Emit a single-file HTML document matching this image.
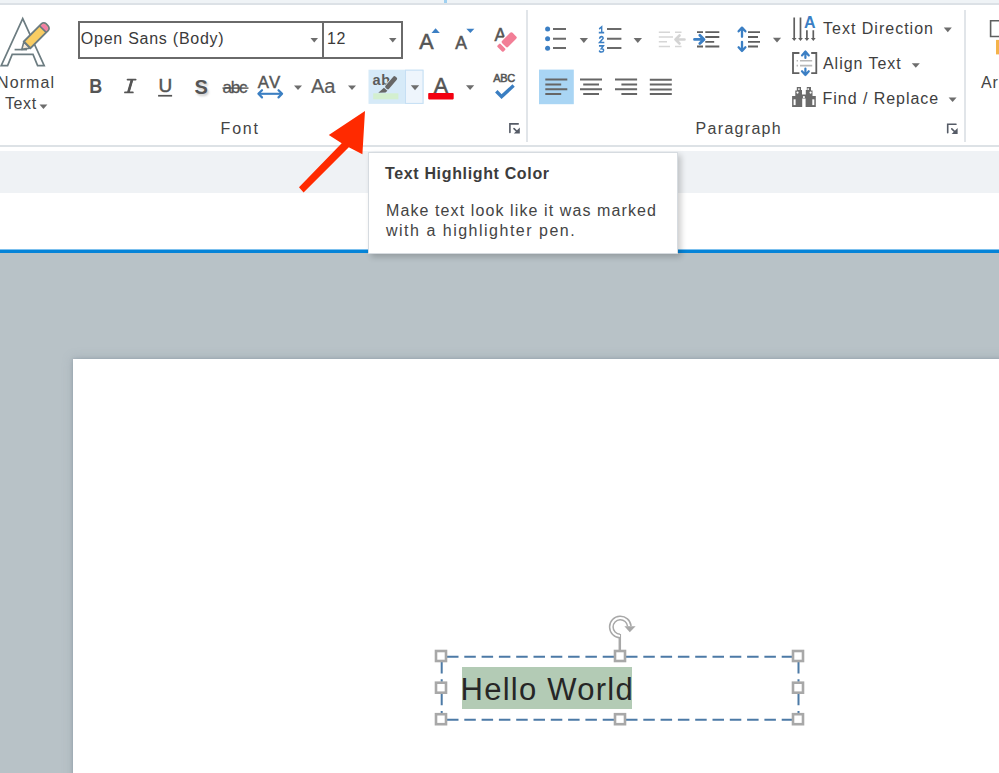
<!DOCTYPE html>
<html><head><meta charset="utf-8">
<style>
html,body{margin:0;padding:0;}
body{width:999px;height:773px;position:relative;overflow:hidden;background:#fff;font-family:"Liberation Sans",sans-serif;color:#444;}
.a{position:absolute;}
.t{position:absolute;font-size:16px;line-height:16px;white-space:pre;color:#444;}
svg{position:absolute;overflow:visible;}
</style></head>
<body>
<!-- top strip -->
<div class="a" style="left:0;top:0;width:999px;height:3px;background:#eff3f6"></div>
<div class="a" style="left:0;top:3px;width:999px;height:2px;background:#dce1e6"></div>
<div class="a" style="left:444px;top:0;width:3px;height:3px;background:#9fd0f0"></div>
<!-- ribbon bottom border -->
<div class="a" style="left:0;top:145px;width:999px;height:2px;background:#dde2e6"></div>
<!-- grey bar -->
<div class="a" style="left:0;top:151px;width:999px;height:42px;background:#eff2f5"></div>
<!-- blue line -->
<div class="a" style="left:0;top:249px;width:999px;height:4px;background:linear-gradient(#7cc0ee 0,#7cc0ee 25%,#0584d8 25%)"></div>
<!-- workspace -->
<div class="a" style="left:0;top:253px;width:999px;height:520px;background:#b8c2c7"></div>
<!-- slide -->
<div class="a" style="left:73px;top:359px;width:960px;height:440px;background:#fff;box-shadow:0 0 3px rgba(120,135,150,0.5),0 0 10px rgba(120,135,150,0.35)"></div>


<!-- font combo -->
<div class="a" style="left:78px;top:21px;width:243px;height:34px;border:2px solid #6a6a6a;background:#fff"></div>
<div class="a" style="left:322px;top:21px;width:77px;height:34px;border:2px solid #6a6a6a;background:#fff"></div>
<div class="t" style="left:80.8px;top:30.7px;letter-spacing:0.75px;color:#3a3a3a">Open Sans (Body)</div>
<div class="t" style="left:327px;top:30.5px;letter-spacing:0.5px;color:#3a3a3a">12</div>

<svg class="a" style="left:0;top:0" width="999" height="773" viewBox="0 0 999 773">
<defs><filter id="blur1" x="-50%" y="-50%" width="200%" height="200%"><feGaussianBlur stdDeviation="0.9"/></filter></defs>
<g font-family="Liberation Sans, sans-serif">
<!-- Normal Text icon: A outline -->
<path d="M22.7 18.6 L1.2 65.6 L7.6 65.6 L12.2 54.4 L33 54.4 L37.6 65.6 L44.2 65.6 Z" fill="none" stroke="#6c7c81" stroke-width="1.7" stroke-linejoin="miter"/>
<line x1="14.6" y1="49.6" x2="27" y2="49.6" stroke="#6c7c81" stroke-width="1.7"/>
<g transform="translate(26.6,45.4) rotate(-45)">
  <path d="M0.5 -4.4 L-6.2 -0.6 L0.5 4.4 Z" fill="#f6ead8" stroke="#6c7c81" stroke-width="1.6" stroke-linejoin="round"/>
  <path d="M0.8 -4.7 H25.6 A3.4 3.4 0 0 1 29 -1.3 V1.3 A3.4 3.4 0 0 1 25.6 4.7 H0.8 Z" fill="#f9cd63" stroke="#6c7c81" stroke-width="1.8"/>
  <path d="M23.4 -3.8 H25.4 A2.6 2.6 0 0 1 28 -1.2 V1.2 A2.6 2.6 0 0 1 25.4 3.8 H23.4 Z" fill="#f37fa6"/>
  <line x1="23" y1="-4.7" x2="23" y2="4.7" stroke="#6c7c81" stroke-width="1.7"/>
</g>

<!-- Font group row 1 -->
<path d="M310.5 38 H318 L314.25 42.5 Z" fill="#6d6d6d"/>
<path d="M389 38 H396.5 L392.75 42.5 Z" fill="#6d6d6d"/>
<text x="419.3" y="48.6" font-size="21.5" fill="#555" stroke="#555" stroke-width="0.55">A</text>
<path d="M431.5 33 L435.6 28.3 L439.8 33 Z" fill="#3c7fc4"/>
<text x="455.3" y="48.6" font-size="17.5" fill="#555" stroke="#555" stroke-width="0.55">A</text>
<path d="M466.3 28.8 H474.4 L470.35 33 Z" fill="#3c7fc4"/>
<text x="494.6" y="40.8" font-size="17.5" fill="#555" stroke="#555" stroke-width="0.5">A</text>
<g transform="translate(509.2,39.8) rotate(-45) scale(1.08)">
  <rect x="-8" y="-5.2" width="16" height="10.4" rx="2" fill="#fff"/>
  <rect x="-6.8" y="-3.95" width="13.6" height="7.9" rx="1.6" fill="#f27e96"/>
  <rect x="-12.3" y="-3.95" width="4" height="7.9" rx="1" fill="#f27e96"/>
</g>

<!-- Font group row 2 -->
<text transform="translate(89.3,93.2) scale(0.9,1.02)" font-size="20" font-weight="bold" fill="#555">B</text>
<path d="M127.6 79.6 H135.6 M125 92.4 H132.8 M132 79.8 L128.4 92.2" fill="none" stroke="#555" stroke-width="1.9" stroke-linecap="round"/><path d="M132 79.8 L128.4 92.2" stroke="#555" stroke-width="2.6"/>
<text x="158.6" y="92.3" font-size="19" fill="#555" stroke="#555" stroke-width="0.5">U</text>
<rect x="158.1" y="94.9" width="14" height="1.7" fill="#555"/>
<text x="196" y="95.5" font-size="20" font-weight="bold" fill="#bbb" opacity="0.8" filter="url(#blur1)">S</text>
<text x="194.5" y="93.6" font-size="20" font-weight="bold" fill="#555">S</text>
<text x="222.5" y="93.3" font-size="17" fill="#555" stroke="#555" stroke-width="0.3" style="letter-spacing:-1.2px">abc</text>
<rect x="222.5" y="87.4" width="26" height="1.4" fill="#555"/>

<text x="257.8" y="88.3" font-size="16.8" fill="#555" stroke="#555" stroke-width="0.45" style="letter-spacing:1.3px">AV</text>
<path d="M258.5 93.8 H282" stroke="#3b7fc2" stroke-width="2.1"/>
<path d="M262 90.2 L258.4 93.8 L262 97.4 M278.5 90.2 L282.1 93.8 L278.5 97.4" fill="none" stroke="#3b7fc2" stroke-width="2.2" stroke-linecap="round" stroke-linejoin="round"/>
<path d="M294 85.4 H302 L298 89.9 Z" fill="#6d6d6d"/>
<text x="311" y="93.2" font-size="20" fill="#5a5a5a" stroke="#5a5a5a" stroke-width="0.2">Aa</text>
<path d="M348 85.4 H356 L352 89.9 Z" fill="#6d6d6d"/>

<!-- highlight split button -->
<rect x="368.5" y="69.7" width="55" height="34.2" fill="#d6eaf8"/>
<rect x="405.5" y="70.2" width="17.5" height="33.2" fill="#eef5fc" stroke="#c6dff4" stroke-width="1"/>
<text x="372.6" y="85.2" font-size="14.5" font-weight="bold" fill="#5b5b5b" style="letter-spacing:0.6px">ab</text>
<rect x="373.2" y="93.3" width="25.2" height="6" fill="#d3efcf"/>
<g transform="translate(391.15,82.75) rotate(-50)">
  <rect x="-7.5" y="-3.1" width="15.5" height="6.2" rx="2" fill="#d6eaf8"/>
  <rect x="-7.5" y="-2.3" width="15" height="4.6" rx="1.5" fill="#666"/>
</g>
<path d="M383.9 87.8 L387.4 90.7 L385.5 92.4 L378.3 92.8 Z" fill="#666"/>
<path d="M410.8 85.3 H419.2 L415 90.3 Z" fill="#6d6d6d"/>

<text x="433.8" y="93" font-size="21.5" fill="#555" stroke="#555" stroke-width="0.55">A</text>
<rect x="428.2" y="93.1" width="25.5" height="6.3" rx="0.8" fill="#f30010"/>
<path d="M466 85.2 H474.2 L470.1 89.9 Z" fill="#6d6d6d"/>
<text x="493.2" y="82" font-size="11" fill="#555" stroke="#555" stroke-width="0.55" style="letter-spacing:-0.3px">ABC</text>
<path d="M496.3 91.2 L501.6 96.6 L513.6 85.6" fill="none" stroke="#3a7ec2" stroke-width="3.4" stroke-linecap="butt" stroke-linejoin="miter"/>

<!-- launchers -->
<path d="M509.9 132.5 V123.9 H518.2" fill="none" stroke="#555b66" stroke-width="1.6" stroke-linecap="round"/>
<path d="M514 128.6 L517.5 132" stroke="#555b66" stroke-width="1.6" stroke-linecap="round"/>
<path d="M513.8 133.6 H519.8 V127.6 Z" fill="#555b66"/>
<path d="M947.7 132.8 V124.2 H956" fill="none" stroke="#555b66" stroke-width="1.6" stroke-linecap="round"/>
<path d="M951.8 128.9 L955.3 132.3" stroke="#555b66" stroke-width="1.6" stroke-linecap="round"/>
<path d="M951.6 133.9 H957.6 V127.9 Z" fill="#555b66"/>


<!-- Paragraph: bullets -->
<g fill="#3b7fc4">
<circle cx="547.6" cy="29" r="2.5"/><circle cx="547.6" cy="38.7" r="2.5"/><circle cx="547.6" cy="48.2" r="2.5"/>
</g>
<g stroke="#6a6a6a" stroke-width="2">
<path d="M553 28.9 H566 M553 38.7 H566 M553 48.1 H566"/>
<path d="M607 28.9 H621.4 M607 38.7 H621.4 M607 48.1 H621.4"/>
</g>
<path d="M579.7 38 H588 L583.85 43 Z" fill="#6d6d6d"/>
<path d="M633.6 38 H642 L637.8 43 Z" fill="#6d6d6d"/>
<g fill="none" stroke="#3b7fc4" stroke-width="1.7" stroke-linecap="square" transform="translate(601.4,0) scale(0.8,1) translate(-601.4,0)">
<path d="M599.3 28.5 L601.8 26.9 V32.6 M599 32.6 H604"/>
<path d="M599.2 38 Q599.6 36.6 601.5 36.6 Q603.8 36.6 603.6 38.4 L599.2 42.5 H604.2"/>
<path d="M599.2 45.8 H603.8 L601.3 48.6 Q604.2 48.6 604.2 50.3 Q604 52 601.6 52 Q599.6 52 599.1 51.2"/>
</g>

<!-- decrease indent (disabled) -->
<g stroke="#d6d6d6" stroke-width="1.6">
<path d="M658.8 32.2 H670 M675 32.2 H681.5 M658.8 37 H673 M658.8 41.8 H667 M658.8 46.5 H670 M675 46.5 H681.5"/>
</g>
<path d="M684.5 39.5 H676 M679.5 35.5 L675.5 39.5 L679.5 43.5" fill="none" stroke="#d4d4d4" stroke-width="2.6" stroke-linejoin="round" stroke-linecap="round"/>
<!-- increase indent -->
<g stroke="#5f5f5f" stroke-width="1.8">
<path d="M697 32.2 H703 M705.3 32.2 H719.3 M705.3 37 H719.3 M705.3 41.8 H714.2 M705.3 46.5 H719.3 M697 46.5 H703"/>
</g>
<path d="M694.5 39.4 H703.3 M699.8 35.2 L704 39.4 L699.8 43.6" fill="none" stroke="#3b7fc4" stroke-width="2.8" stroke-linejoin="round" stroke-linecap="round"/>
<!-- line spacing -->
<g stroke="#5f5f5f" stroke-width="1.8">
<path d="M748 32.2 H760 M748 37 H758 M748 41.8 H760 M748 46.5 H758"/>
</g>
<g fill="none" stroke="#3b7fc4" stroke-width="2.3" stroke-linecap="round" stroke-linejoin="round">
<path d="M742 28 V36.8 M738.6 31.3 L742 27.6 L745.4 31.3"/>
<path d="M742 41.8 V50.5 M738.6 47.3 L742 51 L745.4 47.3"/>
</g>
<path d="M772.9 37.8 H781.1 L777 42.5 Z" fill="#6d6d6d"/>

<!-- alignment row -->
<rect x="539" y="69.6" width="34.8" height="34.6" fill="#a9d5f4"/>
<g stroke="#666" stroke-width="2">
<path d="M545.3 79.6 H567.3 M545.3 84.6 H561.2 M545.3 89.3 H567.3 M545.3 94.1 H561.2"/>
<path d="M580 79.6 H602 M583.2 84.6 H599 M580 89.3 H602 M583.2 94.1 H599"/>
<path d="M615 79.6 H637.1 M621.4 84.6 H637.1 M615 89.3 H637.1 M621.4 94.1 H637.1"/>
<path d="M649.8 79.8 H671.8 M649.8 84.5 H671.8 M649.8 89.4 H671.8 M649.8 94 H671.8"/>
</g>

<!-- text direction -->
<g stroke="#5f5f5f" stroke-width="1.7">
<path d="M794.2 17.5 V38.5 M800.5 17.5 V38.5 M806.9 30.3 V38.5 M813.3 30.3 V38.5"/>
</g>
<g fill="#5f5f5f">
<path d="M791.8 38 H796.6 L794.2 41 Z M798.1 38 H802.9 L800.5 41 Z M804.5 38 H809.3 L806.9 41 Z M810.9 38 H815.7 L813.3 41 Z"/>
</g>
<text x="803.9" y="28" font-size="16" font-weight="bold" fill="#3b7fc4">A</text>
<!-- align text -->
<path d="M799.4 53 H793 V73.2 H799.4 M811.2 53 H816.3 V73.2 H811.2" fill="none" stroke="#606060" stroke-width="1.8"/>
<g stroke="#b8b8b8" stroke-width="1.6">
<path d="M796.6 60.8 H798 M800 60.8 H812.2 M796.6 65.6 H798 M800 65.6 H812.2"/>
</g>
<g fill="none" stroke="#3b7fc4" stroke-width="2.2" stroke-linecap="round" stroke-linejoin="round">
<path d="M805.4 51.5 V58 M802 55.4 L805.4 51.6 L808.8 55.4"/>
<path d="M805.4 68.5 V75 M802 71.2 L805.4 75 L808.8 71.2"/>
</g>
<!-- binoculars -->
<g fill="#6a6a6a">
<path d="M796.8 87 H801 V90 H802 V94.5 H805.8 V90 H806.8 V87 H811 V90.5 H812.5 V96 H815.8 V107 H805.6 V98.6 H802.2 V107 H792.1 V96 H795.3 V90.5 H796.8 Z"/>
</g>
<g fill="#fff">
<rect x="793.6" y="99.3" width="2" height="5.8"/>
<rect x="812.3" y="99.3" width="2" height="5.8"/>
<circle cx="797.5" cy="92.6" r="1.1"/>
<circle cx="810.6" cy="92.6" r="1.1"/>
<circle cx="798.9" cy="89.1" r="0.9"/>
<circle cx="808.2" cy="89.1" r="0.9"/>
<circle cx="803.9" cy="97.1" r="1.1"/>
</g>
<path d="M943.8 27.6 H951.8 L947.8 32.2 Z" fill="#6d6d6d"/>
<path d="M911.8 63.2 H919.8 L915.8 67.8 Z" fill="#6d6d6d"/>
<path d="M948.6 97.4 H956.6 L952.6 102 Z" fill="#6d6d6d"/>
<!-- partial icon right -->
<path d="M999.5 20.8 H990.6 V36.5 H999.5" fill="none" stroke="#5f5f5f" stroke-width="1.6"/>
<rect x="996" y="39.9" width="3" height="14.5" fill="#f4b34a"/>

<!-- Normal Text dropdown -->
<path d="M39.5 104.4 H47.4 L43.45 108.9 Z" fill="#6d6d6d"/>

<text x="221" y="134" font-size="16" fill="none"></text>
</g>

<!-- red arrow -->
<path d="M365 111 L362.4 154.3 L348.8 147.2 L303.6 192.5 L299 187.3 L341.7 143.3 L328.8 134.9 Z" fill="#ff2a00"/>
</svg>

<!-- separators -->
<div class="a" style="left:526px;top:10px;width:2px;height:132px;background:#e1e5e9"></div>
<div class="a" style="left:964px;top:10px;width:2px;height:132px;background:#e1e5e9"></div>

<!-- ribbon texts -->
<div class="t" style="left:-3px;top:74.5px;letter-spacing:1.1px">Normal</div>
<div class="t" style="left:5px;top:95.8px;letter-spacing:0.6px">Text</div>
<div class="t" style="left:220.6px;top:120.5px;letter-spacing:1.8px">Font</div>
<div class="t" style="left:695.6px;top:120.5px;letter-spacing:1.3px">Paragraph</div>
<div class="t" style="left:823px;top:21.2px;letter-spacing:1.0px;color:#3e3e3e">Text Direction</div>
<div class="t" style="left:823px;top:56.1px;letter-spacing:0.95px;color:#3e3e3e">Align Text</div>
<div class="t" style="left:822.6px;top:91px;letter-spacing:0.95px;color:#3e3e3e">Find / Replace</div>
<div class="t" style="left:981px;top:74.5px;letter-spacing:0.8px">Arrange</div>

<!-- tooltip -->
<div class="a" style="left:368px;top:152px;width:308px;height:100px;border:1px solid #d6dbe0;background:#fff;box-shadow:3px 3px 6px rgba(0,0,0,0.2)"></div>
<div class="t" style="left:385px;top:166px;font-weight:bold;letter-spacing:0.65px;color:#3c3c3c">Text Highlight Color</div>
<div class="t" style="left:386px;top:202.5px;letter-spacing:1.1px;color:#444">Make text look like it was marked</div>
<div class="t" style="left:386px;top:222.7px;letter-spacing:1.5px;color:#444">with a highlighter pen.</div>

<!-- text box on slide -->
<div class="a" style="left:462px;top:667px;width:170px;height:42px;background:#b3cbb5"></div>
<div class="t" style="left:460.5px;top:673.8px;font-size:31px;line-height:31px;letter-spacing:1.25px;color:#262626">Hello World</div>


<svg class="a" style="left:0;top:0" width="999" height="773" viewBox="0 0 999 773">
<!-- text box selection -->
<g fill="none" stroke="#4c7aa6" stroke-width="2" stroke-dasharray="11.5 5.8">
<path d="M447 656.8 H614 M626 656.8 H792"/>
<path d="M447 719.7 H614 M626 719.7 H792"/>
<path d="M441.7 662 V681.8 M441.7 693.8 V713.3"/>
<path d="M798.5 662 V681.8 M798.5 693.8 V713.3"/>
</g>
<g fill="#fff" stroke="#a8a8a8" stroke-width="2.6">
<rect x="436" y="651" width="10" height="10"/>
<rect x="615" y="651" width="10" height="10"/>
<rect x="793" y="651" width="10" height="10"/>
<rect x="436" y="682.7" width="10" height="10"/>
<rect x="793" y="682.7" width="10" height="10"/>
<rect x="436" y="714.2" width="10" height="10"/>
<rect x="615" y="714.2" width="10" height="10"/>
<rect x="793" y="714.2" width="10" height="10"/>
</g>
<path d="M619.8 650 V634" stroke="#a8a8a8" stroke-width="2.5"/>
<path d="M619.99 636 A9 9 0 1 1 629.3 626.2" fill="none" stroke="#a8a8a8" stroke-width="5"/>
<path d="M619.99 636 A9 9 0 1 1 629.3 626.2" fill="none" stroke="#fff" stroke-width="2"/>
<path d="M624.4 626.3 L635.6 626.3 L629.8 632.2 Z" fill="#a8a8a8"/>
</svg>
</body></html>
